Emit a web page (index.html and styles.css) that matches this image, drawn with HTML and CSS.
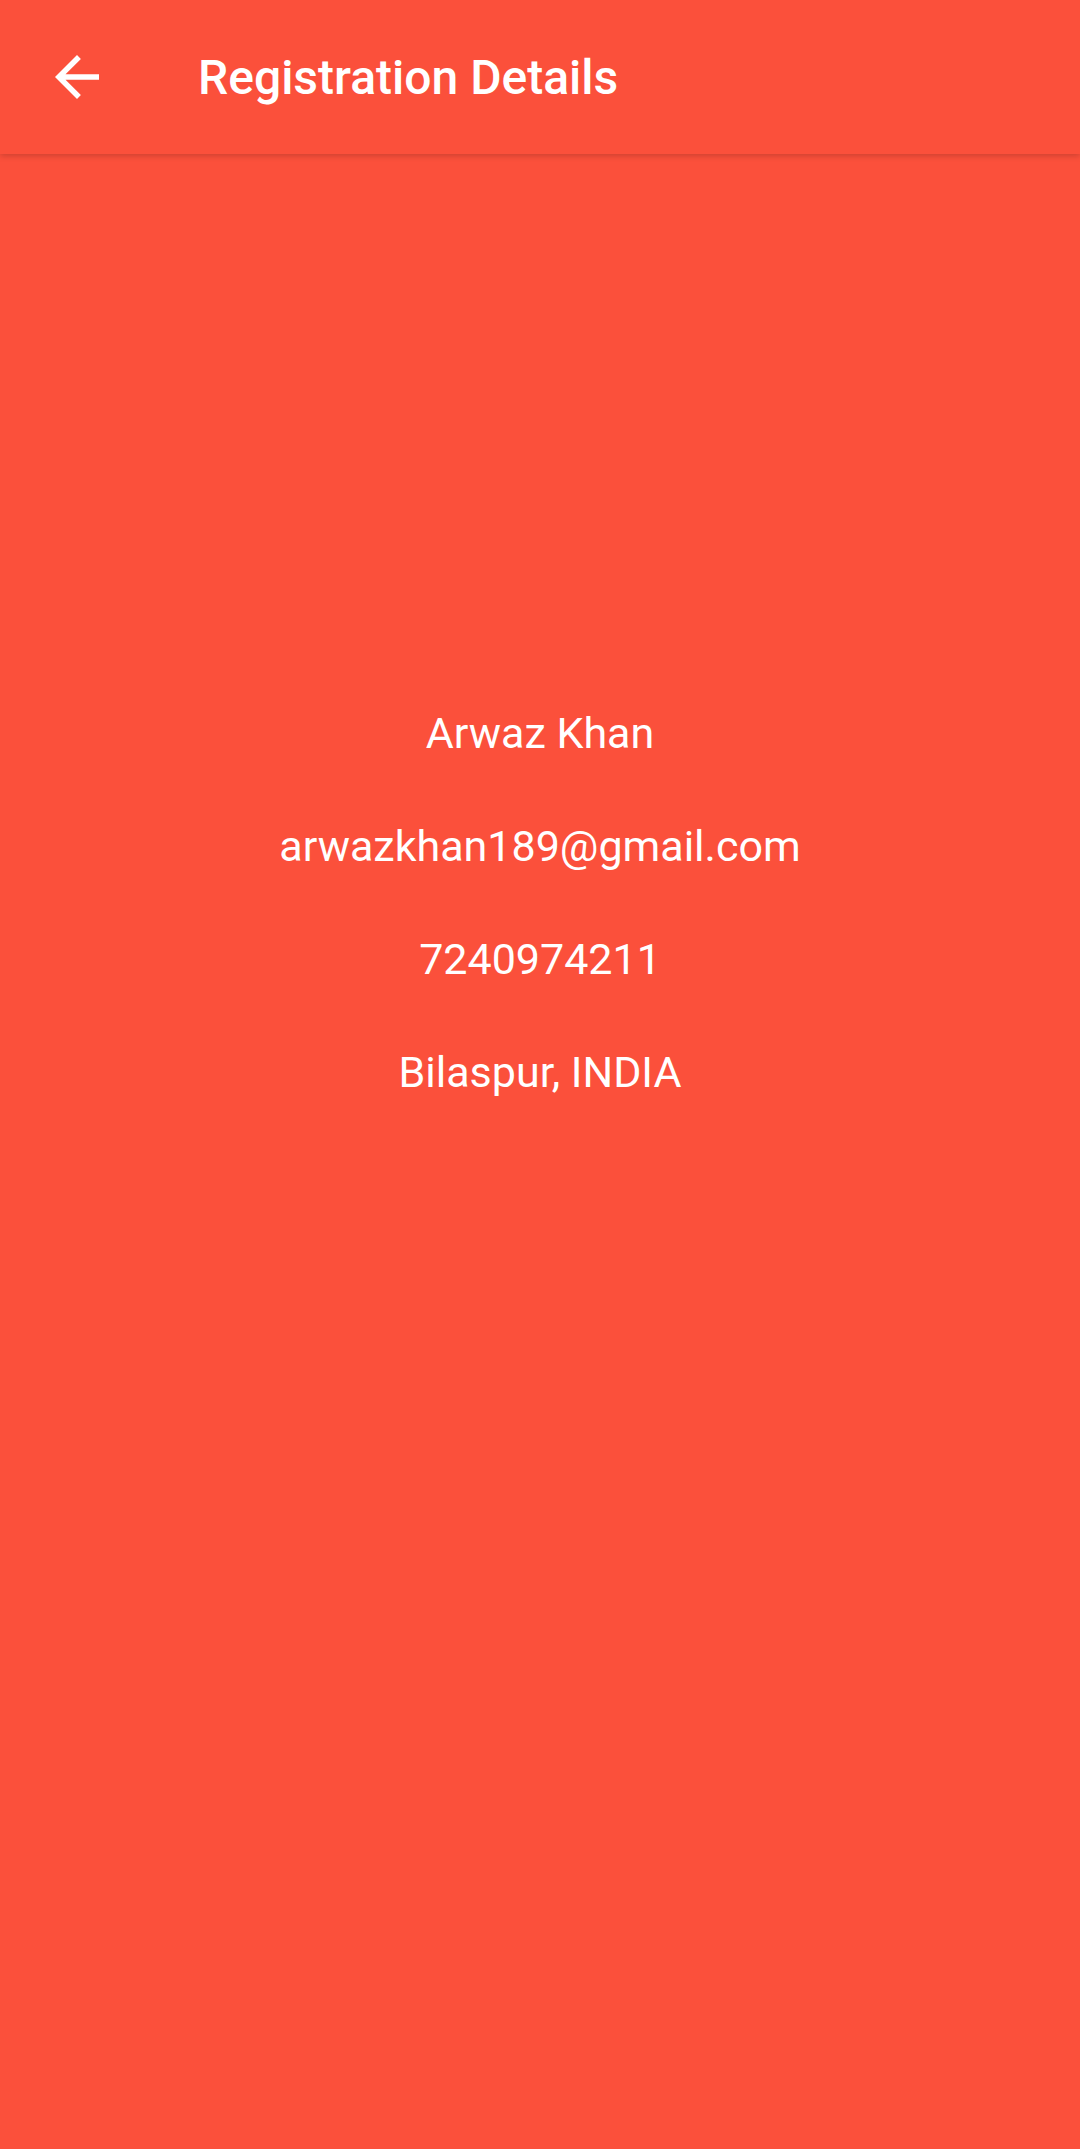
FILE: index.html
```html
<!DOCTYPE html>
<html>
<head>
<meta charset="utf-8">
<link rel="stylesheet" href="styles.css">
</head>
<body>
<header class="appbar">
  <svg class="back" viewBox="0 0 24 24" width="66" height="66"><path fill="#fff" d="M20 11H7.83l5.59-5.59L12 4l-8 8 8 8 1.41-1.41L7.83 13H20v-2z"/></svg>
  <h1 class="title">Registration Details</h1>
</header>
<main class="details">
  <p class="line">Arwaz Khan</p>
  <p class="line">arwazkhan189@gmail.com</p>
  <p class="line">7240974211</p>
  <p class="line">Bilaspur, INDIA</p>
</main>
</body>
</html>
```
FILE: styles.css
```css
html, body {
  margin: 0;
  padding: 0;
  background: #FB503B;
  height: 100%;
  font-family: Roboto, "Noto Sans", sans-serif;
  color: #fff;
}
.appbar {
  height: 154px;
  display: flex;
  align-items: center;
  padding-left: 44px;
  background: #FB503B;
  box-shadow: 0 2px 6px rgba(0,0,0,0.18);
  position: relative;
  z-index: 1;
}
.back {
  flex: none;
  display: block;
}
.title {
  margin: 0 0 0 88px;
  font-size: 48px;
  font-weight: 500;
}
.details {
  padding-top: 550px;
  display: flex;
  flex-direction: column;
  align-items: center;
  gap: 55px;
}
.line {
  margin: 0;
  font-size: 43px;
  line-height: 58px;
  font-weight: 400;
}
```
